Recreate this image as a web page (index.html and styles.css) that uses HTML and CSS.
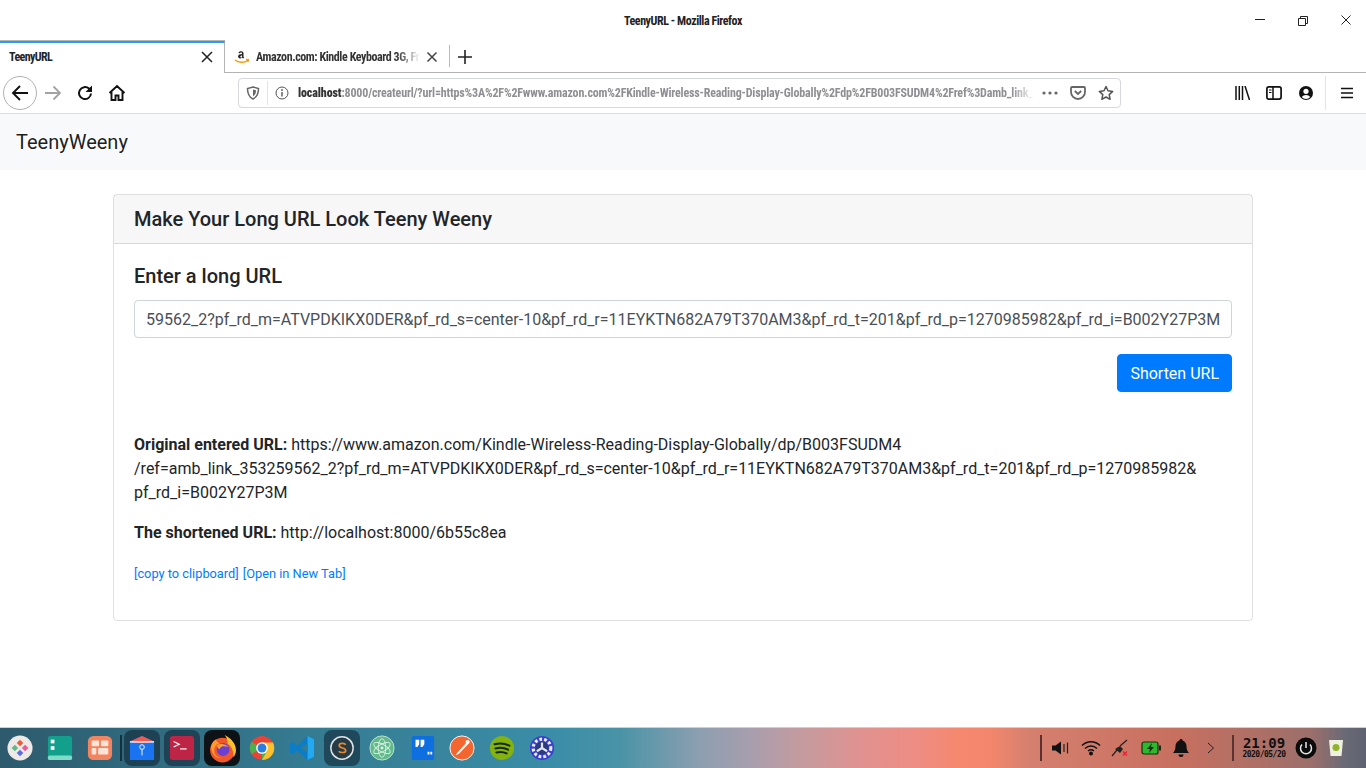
FILE: index.html
```html
<!DOCTYPE html>
<html lang="en">
<head>
<meta charset="utf-8">
<title>TeenyURL</title>
<link rel="stylesheet" href="styles.css">
</head>
<body>
<div class="browser">
  <header class="titlebar">
    <span class="title-text">TeenyURL - Mozilla Firefox</span>
    <div class="win-controls">
      <svg width="16" height="16" viewBox="0 0 16 16"><path d="M3 7.500h10" stroke="#222" fill="none"/></svg>
      <svg width="16" height="16" viewBox="0 0 16 16"><path d="M3.500 6.500h7v7h-7zM5.500 6.500v-2h7v7h-2" stroke="#222" fill="none"/></svg>
      <svg width="16" height="16" viewBox="0 0 16 16"><path d="M3.500 3.500l9 9M12.500 3.500l-9 9" stroke="#222" fill="none"/></svg>
    </div>
  </header>
  <div class="tabstrip">
    <div class="tab tab-active">
      <span class="tab-label">TeenyURL</span>
      <svg class="tab-close" width="12" height="12" viewBox="0 0 12 12"><path d="M1 1l10 10M11 1L1 11" stroke="#222" stroke-width="1.500" fill="none"/></svg>
    </div>
    <div class="tab tab-other">
      <svg class="favicon" width="16" height="16" viewBox="0 0 16 16"><path d="M9.500 7.800V4.300c0-1.400-1-2.100-2.400-2.100-1.300 0-2.400.6-2.700 1.800l1.500.2c.1-.5.500-.8 1.100-.8.700 0 1 .4 1 1v.6c-2 .1-3.900.6-3.900 2.600 0 1.300.9 2 2 2 .9 0 1.500-.3 2-1 .3.400.5.600.9.900l1.200-1c-.3-.3-.7-.6-.7-1zm-2.100.8c-.7 0-1.100-.3-1.100-.9 0-1 .9-1.300 1.800-1.300 0 1.200-.1 2.200-.7 2.200z" fill="#222"/><path d="M1 11c3.500 2.800 9 3 13 .5M12 10.500l2.500.2-.7 2.300" stroke="#f90" stroke-width="1.300" fill="none"/></svg>
      <span class="tab-label tab-label-fade">Amazon.com: Kindle Keyboard 3G, Free 3G + Wi-Fi</span>
      <svg class="tab-close" width="12" height="12" viewBox="0 0 12 12"><path d="M1.500 1.500l9 9M10.500 1.500l-9 9" stroke="#444" stroke-width="1.500" fill="none"/></svg>
    </div>
    <div class="tab-sep"></div>
    <button class="newtab" aria-label="New tab"><svg width="16" height="16" viewBox="0 0 16 16"><path d="M8 1v14M1 8h14" stroke="#222" stroke-width="1.600" fill="none"/></svg></button>
    <div class="tab-fill"></div>
  </div>
  <nav class="toolbar">
    <div class="nav-buttons">
      <div class="back"><svg width="18" height="18" viewBox="0 0 18 18"><path d="M17 9H2M9 2L2 9l7 7" stroke="#111" stroke-width="1.900" fill="none"/></svg></div>
      <div class="nav-btn"><svg width="18" height="18" viewBox="0 0 18 18"><path d="M1 9h15M9.500 2.500L16 9l-6.500 6.500" stroke="#a3a3a3" stroke-width="1.800" fill="none"/></svg></div>
      <div class="nav-btn"><svg width="18" height="18" viewBox="0 0 18 18"><path d="M15 9.500A6 6 0 1 1 13 4.600L15 6.500" stroke="#111" stroke-width="2" fill="none"/><path d="M16 1.500V8H9.500z" fill="#111"/></svg></div>
      <div class="nav-btn"><svg width="18" height="18" viewBox="0 0 18 18"><path d="M1.500 9L9 2l7.500 7M3.500 8v8h4v-4.500h3V16h4V8" stroke="#111" stroke-width="1.900" fill="none"/></svg></div>
    </div>
    <div class="urlbar">
      <svg class="ub-shield" width="14" height="14" viewBox="0 0 14 14"><path d="M7 1l5.500 1.500c0 5-1.500 8.500-5.500 10.500C3 11 1.500 7.500 1.500 2.500z" stroke="#666" stroke-width="1.500" fill="none"/><path d="M7 3.500l3 .8c0 2.800-.8 4.800-3 6z" fill="#666"/></svg>
      <span class="ub-div"></span>
      <svg class="ub-info" width="14" height="14" viewBox="0 0 14 14"><circle cx="7" cy="7" r="6" stroke="#555" fill="none"/><path d="M7 6v4.500" stroke="#555" stroke-width="1.400"/><circle cx="7" cy="4" r=".9" fill="#555"/></svg>
      <span class="ub-text"><b>localhost</b>:8000/createurl/?url=https%3A%2F%2Fwww.amazon.com%2FKindle-Wireless-Reading-Display-Globally%2Fdp%2FB003FSUDM4%2Fref%3Damb_link_353259562_2</span>
      <svg class="ub-dots" width="16" height="4" viewBox="0 0 16 4"><circle cx="2" cy="2" r="1.600" fill="#666"/><circle cx="8" cy="2" r="1.600" fill="#666"/><circle cx="14" cy="2" r="1.600" fill="#666"/></svg>
      <svg class="ub-pocket" width="16" height="14" viewBox="0 0 16 14"><path d="M2 1h12a1 1 0 0 1 1 1v4a7 7 0 0 1-14 0V2a1 1 0 0 1 1-1z" stroke="#666" stroke-width="1.800" fill="none"/><path d="M4.800 5L8 8l3.200-3" stroke="#666" stroke-width="1.800" fill="none"/></svg>
      <svg class="ub-star" width="16" height="16" viewBox="0 0 16 16"><path d="M8 1.500l2 4.300 4.700.6-3.500 3.200.9 4.700L8 12l-4.100 2.300.9-4.700L1.300 6.400 6 5.800z" stroke="#555" stroke-width="1.500" fill="none" stroke-linejoin="round"/></svg>
    </div>
    <div class="tools">
      <svg class="tool-lib" width="16" height="14" viewBox="0 0 16 14"><path d="M1 0v14M4.300 0v14M7.500 0v14M10 0l4.500 14" stroke="#111" stroke-width="1.500" fill="none"/></svg>
      <svg class="tool-side" width="16" height="14" viewBox="0 0 16 14"><rect x=".9" y=".9" width="14.200" height="12.200" rx="2" stroke="#111" stroke-width="1.700" fill="none"/><path d="M7 1v12" stroke="#111" stroke-width="1.500"/><path d="M3 4h2.500M3 6.500h2.500" stroke="#111"/></svg>
      <svg class="tool-acct" width="14" height="14" viewBox="0 0 14 14"><circle cx="7" cy="7" r="7" fill="#111"/><circle cx="7" cy="5.300" r="2.600" fill="#fff"/><path d="M2.700 11a5.500 5.500 0 0 1 8.600 0 5.800 5.800 0 0 1-8.600 0z" fill="#fff"/></svg>
      <span class="tools-sep"></span>
      <svg class="tool-menu" width="12" height="12" viewBox="0 0 12 12"><path d="M0 1.500h12M0 6h12M0 10.500h12" stroke="#111" stroke-width="1.700"/></svg>
    </div>
  </nav>
</div>

<main class="page">
  <div class="site-nav"><a class="brand">TeenyWeeny</a></div>
  <div class="container">
    <section class="card">
      <h5 class="card-header">Make Your Long URL Look Teeny Weeny</h5>
      <div class="card-body">
        <h5 class="card-title">Enter a long URL</h5>
        <div class="url-input">59562_2?pf_rd_m=ATVPDKIKX0DER&amp;pf_rd_s=center-10&amp;pf_rd_r=11EYKTN682A79T370AM3&amp;pf_rd_t=201&amp;pf_rd_p=1270985982&amp;pf_rd_i=B002Y27P3M</div>
        <div class="actions"><button class="btn">Shorten URL</button></div>
        <p class="orig"><strong>Original entered URL:</strong> https://www.amazon.com/Kindle-Wireless-Reading-Display-Globally/dp/B003FSUDM4<br>/ref=amb_link_353259562_2?pf_rd_m=ATVPDKIKX0DER&amp;pf_rd_s=center-10&amp;pf_rd_r=11EYKTN682A79T370AM3&amp;pf_rd_t=201&amp;pf_rd_p=1270985982&amp;<br>pf_rd_i=B002Y27P3M</p>
        <p class="short"><strong>The shortened URL:</strong> http://localhost:8000/6b55c8ea</p>
        <p class="links"><a>[copy to clipboard]</a> <a>[Open in New Tab]</a></p>
      </div>
    </section>
  </div>
</main>

<footer class="dock">
  <div class="dock-apps">
    <div class="app"><svg viewBox="0 0 28 28"><circle cx="14" cy="14" r="13.500" fill="#ece9e6"/><path d="M14 5l3.500 3.500L14 12l-3.500-3.500z" fill="#ee5a3a"/><path d="M8.500 10.500L12 14l-3.500 3.500L5 14z" fill="#5fb88a"/><path d="M19.500 10.500L23 14l-3.500 3.500L16 14z" fill="#e95a9a"/><path d="M14 16l3.500 3.500L14 23l-3.500-3.500z" fill="#5a6ae8"/></svg></div>
    <div class="app"><svg viewBox="0 0 28 28"><rect x="1" y="1" width="26" height="26" rx="3" fill="#12a08c"/><rect x="1" y="22" width="26" height="5" rx="2" fill="#7fdcc8"/><rect x="4" y="5" width="4" height="4" fill="#fff"/><rect x="4" y="12" width="4" height="4" fill="#fff"/></svg></div>
    <div class="app"><svg viewBox="0 0 28 28"><rect x="1" y="1" width="26" height="26" rx="6" fill="#f28560"/><rect x="5" y="6" width="8" height="6" rx="1" fill="#ffe3d6"/><rect x="15" y="6" width="8" height="6" rx="1" fill="#ffe3d6"/><rect x="5" y="14" width="5" height="7" rx="1" fill="#ffe3d6"/><rect x="12" y="14" width="11" height="7" rx="1" fill="#ffe3d6"/></svg></div>
    <span class="dock-sep"></span>
    <div class="app running"><svg viewBox="0 0 28 28"><path d="M1 7l13-6 13 6v20H1z" fill="#1a73f0"/><path d="M1 7l13-6 13 6-13 2z" fill="#f05a50"/><path d="M1 7.500h26" stroke="#fff" stroke-width="1.400"/><circle cx="14" cy="13" r="2.500" stroke="#fff" fill="none"/><path d="M14 15.500V22" stroke="#fff"/></svg></div>
    <div class="app running"><svg viewBox="0 0 28 28"><rect x="1" y="1" width="26" height="26" rx="3" fill="#bd2445"/><path d="M5 7l6 3-6 3" stroke="#fff" stroke-width="1.300" fill="none"/><path d="M12 15h7" stroke="#fff" stroke-width="1.300"/></svg></div>
    <div class="app running-black"><svg class="fx" viewBox="0 0 28 28"><circle cx="14" cy="15.500" r="12" fill="#f0582c"/><path d="M16 1c6 3 11 8 11 14.500 0 3-1 5-2.500 7 .5-5-1-10-5.500-13 .5-3-1-6-3-8.500z" fill="#ffc02e"/><circle cx="14.500" cy="15" r="6.200" fill="#6b3fd0"/><path d="M3 12c1-4 3-6 5-7 0 2 1 3 3 4-3 1-5 3-5 7 0 4 3 7 7 7-5 1-10-4-10-11z" fill="#ff9a2a"/><path d="M8.500 11c3-2 8-2 11 1.500-3-1-7-1-8 1.500-1 1-2 0-3-3z" fill="#f8a02a"/></svg></div>
    <div class="app"><svg viewBox="0 0 28 28"><circle cx="14" cy="14" r="13" fill="#ea4335"/><path d="M14 14L25.300 20.500A13 13 0 0 1 14 27z" fill="#4caf50"/><path d="M14 14L2.700 20.500A13 13 0 0 1 2.700 7.500z" fill="#4caf50"/><path d="M14 8h11.800A13 13 0 0 1 14 27l5-9z" fill="#fbc02d"/><circle cx="14" cy="14" r="6.300" fill="#fff"/><circle cx="14" cy="14" r="4.800" fill="#2a7de1"/></svg></div>
    <div class="app"><svg viewBox="0 0 28 28"><path d="M20 1l7 3.500v19L20 27 9 16.500 4 20.500 1 19V9l3-1.500 5 4z" fill="#0a7cc8"/><path d="M20 1l7 3.500v19L20 27z" fill="#23a9f2"/><path d="M20 8.500L12 14l8 5.500z" fill="#2f7d98"/></svg></div>
    <div class="app running"><svg viewBox="0 0 28 28"><circle cx="14" cy="14" r="12" stroke="#dde3e6" stroke-width="1.600" fill="#263b46"/><path d="M18 10.500c-1-1.800-7-2.300-7 .8 0 3.300 7 2 7 5.300 0 3-6 2.800-7.500.8" stroke="#e8892b" stroke-width="1.800" fill="none"/></svg></div>
    <div class="app"><svg viewBox="0 0 28 28"><circle cx="14" cy="14" r="13" fill="#62b98b" stroke="#c6e6d4"/><g stroke="#d8f2e2" fill="none"><ellipse cx="14" cy="14" rx="10" ry="4" transform="rotate(30 14 14)"/><ellipse cx="14" cy="14" rx="10" ry="4" transform="rotate(-30 14 14)"/><ellipse cx="14" cy="14" rx="10" ry="4" transform="rotate(90 14 14)"/></g><circle cx="14" cy="14" r="1.600" fill="#d8f2e2"/></svg></div>
    <div class="app"><svg viewBox="0 0 28 28"><rect x="3" y="1" width="24" height="26" rx="2" fill="#0d6fe0"/><path d="M7 5h4v5l-2 3H7zM12.500 5h4v5l-2 3h-2z" fill="#fff"/><path d="M20 18h2v3h-2zM23 18h2v3h-2z" fill="#fff"/></svg></div>
    <div class="app"><svg viewBox="0 0 28 28"><circle cx="14" cy="14" r="13" fill="#f4662f" stroke="#fff"/><path d="M7 22l2-3 10-11 2 1.500L11 20z" fill="#fff"/><circle cx="20" cy="7.500" r="2.200" fill="#fff"/></svg></div>
    <div class="app"><svg viewBox="0 0 28 28"><circle cx="14" cy="14" r="13" fill="#84b30f"/><path d="M6 10c5-1.500 11-1 16 1.500M7 14.500c4.500-1.200 9.500-.8 13.500 1.300M8 18.800c3.800-1 7.800-.6 11 1" stroke="#15280a" stroke-width="2.200" stroke-linecap="round" fill="none"/></svg></div>
    <div class="app"><svg viewBox="0 0 28 28"><circle cx="14" cy="14" r="13" fill="#3a3fc8"/><circle cx="14" cy="14" r="9.500" fill="none" stroke="#e8ecff" stroke-width="3.400" stroke-dasharray="3 2.200"/><circle cx="14" cy="14" r="7" fill="#2c3a78"/><path d="M14 14V8M14 14l-5.500 3.500M14 14l5.500 3.500" stroke="#dfe4ff" stroke-width="2.400"/></svg></div>
  </div>
  <div class="dock-tray">
    <span class="tray-sep"></span>
    <div class="tray"><svg width="18" height="14" viewBox="0 0 18 14"><path d="M0 4.500h3.500L9 .5v13l-5.500-4H0z" fill="#111"/><path d="M12 3v8M15.500 1.500v11" stroke="#222" stroke-width="1.200"/></svg></div>
    <div class="tray"><svg width="20" height="16" viewBox="0 0 20 16"><path d="M1 5.500c5-5 13-5 18 0M4 8.500c3.500-3.300 8.500-3.300 12 0M7 11c1.800-1.400 4.200-1.400 6 0" stroke="#111" stroke-width="1.500" fill="none"/><circle cx="10" cy="13.500" r="2" fill="#111"/></svg></div>
    <div class="tray"><svg width="20" height="18" viewBox="0 0 20 18"><path d="M1 17l5-6" stroke="#222" stroke-width="1.200"/><path d="M4 10l5-3 3 3-3 4z" fill="#222"/><path d="M9 7l7-6" stroke="#222" stroke-width="1.200"/><path d="M12 12.500l4 4M16 12.500l-4 4" stroke="#e8213a" stroke-width="1.400"/></svg></div>
    <div class="tray"><svg width="20" height="14" viewBox="0 0 20 14"><rect x="1" y="1" width="16" height="12" rx="2" fill="#2eb82e" stroke="#15300f" stroke-width="1.200"/><path d="M11 2L6 8h3l-1 4 5-6h-3z" fill="#15300f"/><rect x="18" y="4.500" width="2" height="5" fill="#15300f"/></svg></div>
    <div class="tray"><svg width="16" height="18" viewBox="0 0 16 18"><path d="M8 0c1 0 1.500.6 1.500 1.400C12 2.200 13.500 4.500 13.500 7c0 3.500 1 5.500 2.500 7H0c1.500-1.500 2.500-3.500 2.500-7 0-2.500 1.500-4.800 4-5.600C6.500.6 7 0 8 0z" fill="#111"/><path d="M5.500 15.500h5a2.500 2.500 0 0 1-5 0z" fill="#111"/></svg></div>
    <div class="tray"><svg width="8" height="12" viewBox="0 0 8 12"><path d="M1 1l5.500 5L1 11" stroke="#222" stroke-width="1" fill="none"/></svg></div>
    <span class="tray-sep tray-sep-2"></span>
    <div class="clock"><span class="clock-time">21:09</span><span class="clock-date">2020/05/20</span></div>
    <div class="tray tray-power"><svg width="22" height="22" viewBox="0 0 22 22"><circle cx="11" cy="11" r="10.500" fill="#0b0b0b"/><path d="M7 7.500a5.500 5.500 0 1 0 8 0" stroke="#e8e8e8" stroke-width="1.500" fill="none"/><path d="M11 5v6" stroke="#e8e8e8" stroke-width="1.500"/></svg></div>
    <div class="tray tray-trash"><svg width="16" height="18" viewBox="0 0 16 18"><path d="M1 1h14l-1.500 16h-11z" fill="#eef0e0"/><circle cx="8" cy="8.500" r="3.500" fill="#8fb32a"/></svg></div>
  </div>
</footer>
</body>
</html>
```
FILE: styles.css
```css
* { box-sizing: border-box; }
html, body { margin: 0; padding: 0; }
body {
  width: 1366px;
  height: 768px;
  overflow: hidden;
  display: flex;
  flex-direction: column;
  background: #fff;
  font-family: Roboto, "Liberation Sans", sans-serif;
  color: #212529;
}

/* Browser chrome */
.browser { flex: none; font-family: "Liberation Sans Narrow", "Roboto Condensed", Roboto, sans-serif; }
.titlebar {
  height: 41px;
  position: relative;
  display: flex;
  justify-content: center;
  padding-top: 14px;
}
.title-text { font-size: 12px; font-weight: 700; line-height: 14px; letter-spacing: -.43px; color: #222; }
.win-controls {
  position: absolute;
  top: 12px;
  right: 12px;
  display: flex;
  gap: 27px;
}
.tabstrip { height: 32px; display: flex; align-items: stretch; }
.tab { display: flex; align-items: center; font-size: 12px; font-weight: 700; letter-spacing: -.42px; }
.tab-active {
  width: 225px;
  padding: 0 11px 2px 9px;
  border-top: 2px solid #2f9ceb;
  border-right: 1px solid #b4b4b4;
  box-shadow: 0 -1px 0 #b4b4b4;
  justify-content: space-between;
}
.tab-active .tab-label { letter-spacing: -.6px; }
.tab-other {
  width: 224px;
  padding: 0 11px 0 9px;
  border-bottom: 1px solid #b4b4b4;
  border-top: 1px solid transparent;
  color: #333;
}
.favicon { flex: none; margin-right: 6px; }
.tab-label { white-space: nowrap; }
.tab-label-fade {
  flex: 1;
  overflow: hidden;
  -webkit-mask-image: linear-gradient(to right, #000 86%, transparent);
  mask-image: linear-gradient(to right, #000 86%, transparent);
}
.tab-close { flex: none; }
.tab-other .tab-close { margin-left: 6px; }
.tab-sep { width: 1px; flex: none; border-bottom: 1px solid #b4b4b4; position: relative; }
.tab-sep::before { content: ""; position: absolute; left: 0; top: 4px; bottom: 5px; width: 1px; background: #bbb; }
.newtab {
  flex: none;
  width: 30px;
  padding: 0;
  border: 0;
  background: none;
  border-bottom: 1px solid #b4b4b4;
  display: flex;
  align-items: center;
  justify-content: center;
}
.tab-fill { flex: 1; border-bottom: 1px solid #b4b4b4; }
.toolbar {
  height: 41px;
  display: flex;
  align-items: center;
  border-bottom: 1px solid #dcdde2;
  padding: 0 0 1px 3px;
}
.nav-buttons { width: 235px; flex: none; display: flex; align-items: center; }
.back {
  width: 34px;
  height: 34px;
  border: 1px solid #b1b1b3;
  border-radius: 50%;
  display: flex;
  align-items: center;
  justify-content: center;
}
.nav-btn { width: 32px; display: flex; justify-content: center; }
.urlbar {
  width: 883px;
  height: 30px;
  flex: none;
  border: 1px solid #d7d7de;
  border-radius: 4px;
  display: flex;
  align-items: center;
  padding: 0 6px 0 7px;
}
.ub-shield, .ub-info { flex: none; }
.ub-div { width: 1px; height: 24px; background: #e4e4e8; margin: 0 7px; flex: none; }
.ub-text {
  flex: 1;
  min-width: 0;
  margin: 0 8px 0 9px;
  white-space: nowrap;
  overflow: hidden;
  font-size: 12px;
  font-weight: 700;
  letter-spacing: -.17px;
  color: #8f8f93;
  -webkit-mask-image: linear-gradient(to right, #000 97%, transparent);
  mask-image: linear-gradient(to right, #000 97%, transparent);
}
.ub-text b { color: #333; letter-spacing: -.1px; }
.ub-dots { flex: none; margin-right: 12px; }
.ub-pocket { flex: none; margin-right: 12px; }
.ub-star { flex: none; }
.tools { flex: 1; display: flex; align-items: center; padding-left: 114px; }
.tools svg { flex: none; }
.tool-lib { margin-right: 15px; }
.tool-side { margin-right: 17px; }
.tool-acct { margin-right: 12px; }
.tools-sep { width: 1px; height: 34px; background: #e4e4e8; flex: none; margin-right: 15px; }

/* Page */
.page { flex: 1; min-height: 0; }
.site-nav { height: 56px; padding: 0 16px; display: flex; align-items: center; background: #f8f9fa; }
.brand { font-size: 20px; color: rgba(0,0,0,.9); line-height: 30px; }
.container { width: 1140px; margin: 24px auto 0; }
.card { border: 1px solid rgba(0,0,0,.125); border-radius: 4px; }
.card-header {
  margin: 0;
  padding: 12px 20px;
  font-size: 20px;
  font-weight: 500;
  line-height: 24px;
  background: rgba(0,0,0,.03);
  border-bottom: 1px solid rgba(0,0,0,.125);
}
.card-body { padding: 20px; height: 376px; }
.card-title { margin: 0 0 12px; font-size: 20px; font-weight: 500; line-height: 24px; }
.url-input {
  height: 38px;
  padding: 7px 12px 5px 11px;
  font-size: 16px;
  line-height: 24px;
  color: #495057;
  border: 1px solid #ced4da;
  border-radius: 4px;
  white-space: nowrap;
  overflow: hidden;
}
.actions { display: flex; justify-content: flex-end; margin-top: 16px; }
.btn {
  height: 38px;
  padding: 7px 12px 5px;
  font: 400 16px/24px Roboto, sans-serif;
  color: #fff;
  background: #007bff;
  border: 1px solid #007bff;
  border-radius: 4px;
}
.orig { margin: 41px 0 16px; font-size: 16px; line-height: 24px; }
.short { margin: 0 0 16px; font-size: 16px; line-height: 24px; }
strong { font-weight: 700; }
.links { margin: 0; font-size: 12.800px; line-height: 26px; color: #007bff; }
.links a + a { margin-left: 1px; }

/* Dock */
.dock {
  height: 41px;
  flex: none;
  display: flex;
  justify-content: space-between;
  border-top: 1px solid #cfcfcf;
  background: linear-gradient(to right, #2d5a6c 0, #34788e 20%, #3b8ea8 41%, #4a93a7 45.400%, #8c9fb0 51.200%, #a89eae 55%, #c49b9f 58.600%, #e09290 63%, #ee8c82 67.300%, #f5886e 70.300%, #f3866c 72.500%, #d5806f 75.400%, #c8705f 86%, #9c6f6b 96%, #686a75 98.500%, #5f6270 100%);
}
.dock-apps { display: flex; align-items: center; }
.app { width: 40px; height: 36px; flex: none; display: flex; align-items: center; justify-content: center; position: relative; z-index: 0; }
.app svg { width: 26px; height: 26px; }
.app svg.fx { width: 29px; height: 29px; }
.app::before { content: ""; position: absolute; left: 2px; right: 2px; top: 0; bottom: 0; border-radius: 8px; z-index: -1; }
.running::before { background: rgba(20,45,60,.65); }
.running-black::before { background: #0c1216; }
.dock-sep { width: 2px; height: 26px; background: #14303d; flex: none; }
.dock-tray { display: flex; align-items: center; padding-right: 12px; }
.tray { width: 30px; height: 36px; flex: none; display: flex; align-items: center; justify-content: center; }
.tray-sep { width: 2px; height: 26px; background: #5a3230; flex: none; margin-right: 4px; }
.tray-sep-2 { margin: 0 0 0 6px; }
.clock { width: 60px; flex: none; display: flex; flex-direction: column; align-items: center; color: #111; font-family: "DejaVu Sans Mono", monospace; font-weight: 700; }
.clock-time { font-size: 14px; line-height: 13px; }
.clock-date { font-size: 8px; line-height: 9px; letter-spacing: -.5px; }
.tray-power { width: 24px; }
.tray-trash { width: 36px; }
```
